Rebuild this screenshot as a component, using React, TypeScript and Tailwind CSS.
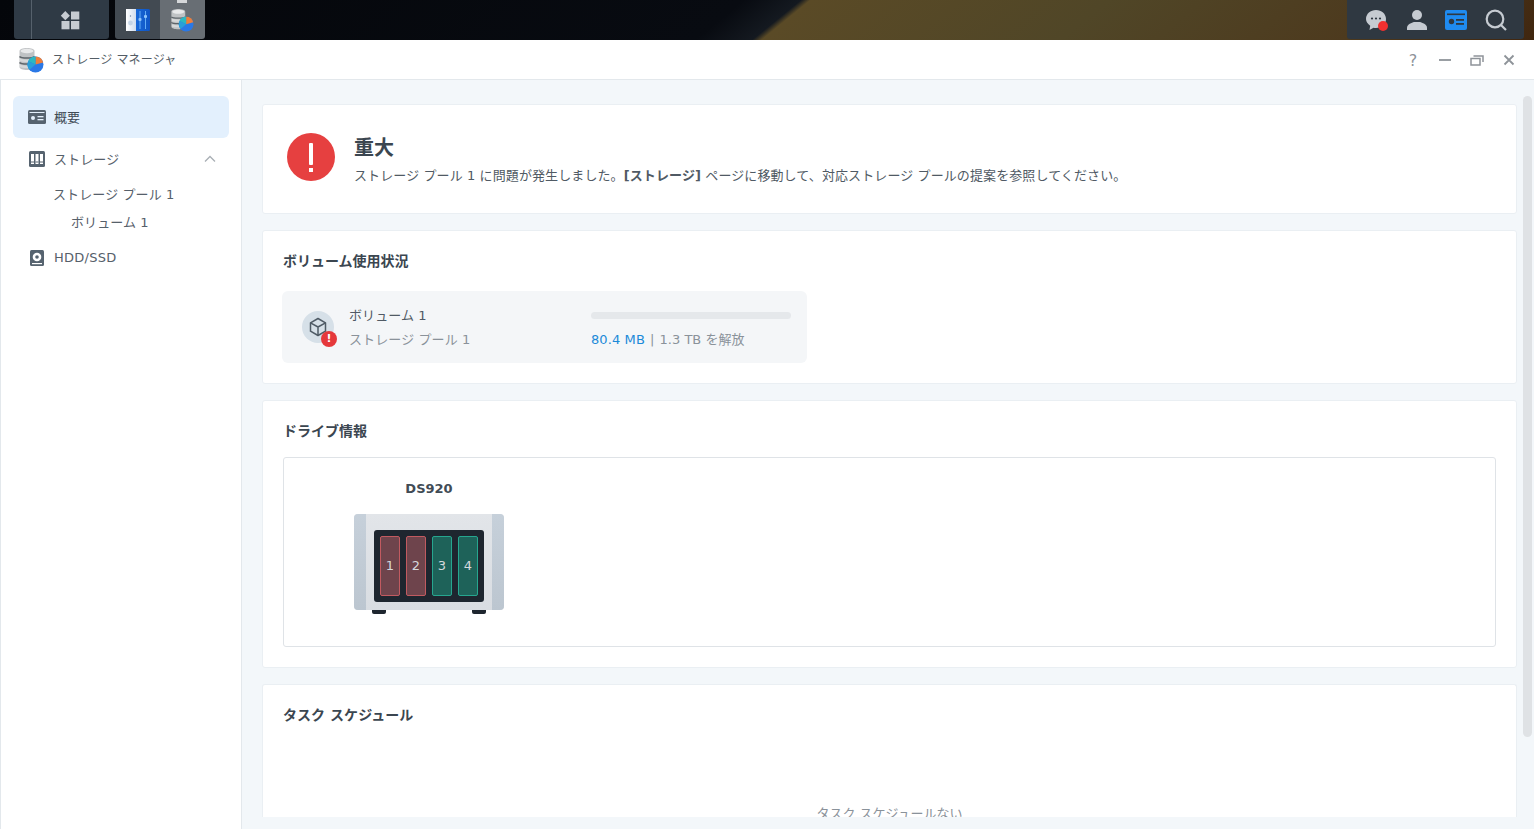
import React from "react";

const font = "font-['DejaVu_Sans','Noto_Sans_CJK_JP',sans-serif]";

function StorageAppIcon({ size = 26 }: { size?: number }) {
  return (
    <svg width={size} height={size} viewBox="0 0 26 26">
      <path d="M1.500 4C1.500 2 5 1 9 1s7.500 1 7.500 3v16c0 2-3.500 3-7.500 3s-7.500-1-7.500-3z" fill="#bfc2c4" />
      <ellipse cx="9" cy="4" rx="6.500" ry="2.200" fill="#e8e9ea" />
      <path d="M1.500 9.500c1.500 2 13.500 2 15 0M1.500 15.500c1.500 2 13.500 2 15 0" stroke="#5f656a" strokeWidth="1.400" fill="none" />
      <path d="M2 11.500c2 1.500 12 1.500 14 0v2.500c-2 1.300-12 1.300-14 0z" fill="#d6d8d9" />
      <path d="M2 17.500c2 1.500 12 1.500 14 0v2.500c-2 1.300-12 1.300-14 0z" fill="#d6d8d9" />
      <circle cx="17.500" cy="17.500" r="8" fill="#2a78e6" />
      <path d="M17.500 17.500V9.500a8 8 0 0 1 7.700 6z" fill="#ee7f3a" />
      <path d="M17.500 17.500l-7.300-3.300A8 8 0 0 1 17.500 9.500z" fill="#2cb8c0" />
      <path d="M17.500 17.500l-7.300-3.300a8 8 0 0 0 1.300 8.500z" fill="#2a9fd8" />
    </svg>
  );
}

function ControlPanelIcon() {
  return (
    <svg width="26" height="24" viewBox="0 0 26 24">
      <defs>
        <linearGradient id="cpRight" x1="0" y1="0" x2="1" y2="0">
          <stop offset="0" stopColor="#1c74e6" />
          <stop offset="1" stopColor="#0f55c4" />
        </linearGradient>
        <linearGradient id="cpLeft" x1="0" y1="0" x2="1" y2="0">
          <stop offset="0" stopColor="#ffffff" />
          <stop offset="1" stopColor="#cfdced" />
        </linearGradient>
      </defs>
      <rect x="1" y="1" width="24" height="22" rx="1.500" fill="url(#cpRight)" />
      <rect x="1" y="1" width="10" height="22" fill="url(#cpLeft)" />
      <circle cx="5.500" cy="15" r="2.400" fill="#c4d4e6" />
      <circle cx="5.500" cy="8" r="0.700" fill="#6d87a5" />
      <path d="M15 3v18M20.500 3v18" stroke="#62adf7" strokeWidth="1" />
      <rect x="13.500" y="10" width="3" height="3" rx="1" fill="#8ec4fb" />
      <rect x="19" y="7" width="3" height="3" rx="1" fill="#8ec4fb" />
    </svg>
  );
}

function Grid4() {
  return (
    <svg width="20" height="20" viewBox="0 0 20 20" fill="#c6cbd1">
      <path d="M5.300 1l4.600 4.700-4.600 4.500L.8 5.700z" />
      <rect x="11" y="1.500" width="8.300" height="8" />
      <rect x="1.500" y="11" width="8" height="8.300" />
      <rect x="11" y="11" width="8.300" height="8.300" />
    </svg>
  );
}

function CardIcon({ bg, fg, w = 22, h = 20 }: { bg: string; fg: string; w?: number; h?: number }) {
  return (
    <svg width={w} height={h} viewBox="0 0 22 20">
      <rect x="0" y="0" width="22" height="20" rx="2" fill={bg} />
      <rect x="2" y="3.500" width="18" height="1.600" fill={fg} />
      <circle cx="6.500" cy="11.500" r="2.700" fill={fg} />
      <rect x="11" y="9" width="8" height="1.800" fill={fg} />
      <rect x="11" y="13" width="8" height="1.800" fill={fg} />
    </svg>
  );
}

function NavOverview() {
  return (
    <svg width="18" height="14" viewBox="0 0 18 14">
      <rect width="18" height="14" rx="1.500" fill="#56636f" />
      <rect x="1.500" y="2" width="15" height="1" fill="#e4f0fc" />
      <circle cx="5" cy="8" r="2" fill="#e4f0fc" />
      <rect x="9.500" y="6" width="6" height="1.300" fill="#e4f0fc" />
      <rect x="9.500" y="9" width="6" height="1.300" fill="#e4f0fc" />
    </svg>
  );
}

function NavStorage() {
  return (
    <svg width="16" height="16" viewBox="0 0 16 16">
      <rect width="16" height="16" rx="1.500" fill="#56636f" />
      <rect x="2" y="3" width="3" height="10" fill="#fff" />
      <rect x="6.500" y="3" width="3" height="10" fill="#fff" />
      <rect x="11" y="3" width="3" height="10" fill="#fff" />
      <rect x="2" y="10.500" width="3" height="1" fill="#56636f" />
      <rect x="6.500" y="10.500" width="3" height="1" fill="#56636f" />
      <rect x="11" y="10.500" width="3" height="1" fill="#56636f" />
    </svg>
  );
}

function NavDisk() {
  return (
    <svg width="14" height="16" viewBox="0 0 14 16">
      <rect width="14" height="16" rx="1.500" fill="#56636f" />
      <circle cx="7" cy="7" r="4.300" fill="#fff" />
      <circle cx="7" cy="7" r="1.800" fill="#56636f" />
      <rect x="2" y="13" width="10" height="1.200" fill="#fff" />
    </svg>
  );
}

function Nas() {
  const bays = [
    { n: "1", c: "bg-[#6e444c] border-[#c15a60]" },
    { n: "2", c: "bg-[#6e444c] border-[#c15a60]" },
    { n: "3", c: "bg-[#1e6259] border-[#26a68f]" },
    { n: "4", c: "bg-[#1e6259] border-[#26a68f]" },
  ];
  return (
    <div className="flex flex-col w-[150px]">
      <div className="flex h-24 rounded-[4px] overflow-hidden bg-[linear-gradient(180deg,#e2e5e9,#d9dde2)]">
        <div className="w-3 bg-[linear-gradient(180deg,#c6d0da,#bcc6d0)]" />
        <div className="flex-1 flex items-center justify-center pt-2">
          <div className="w-[110px] h-[72px] rounded-[3px] bg-[#1e262f] flex items-center justify-center gap-1.5">
            {bays.map((b) => (
              <div
                key={b.n}
                className={`w-5 h-[60px] rounded-[2px] border flex items-center justify-center text-[13px] text-[#d5d9dd] ${b.c}`}
              >
                {b.n}
              </div>
            ))}
          </div>
        </div>
        <div className="w-3 bg-[linear-gradient(180deg,#c6d0da,#bcc6d0)]" />
      </div>
      <div className="flex justify-between px-[18px]">
        <div className="w-3.5 h-1 rounded-b-[2px] bg-[#1e262f]" />
        <div className="w-3.5 h-1 rounded-b-[2px] bg-[#1e262f]" />
      </div>
    </div>
  );
}

export default function App() {
  return (
    <div className={`h-[829px] w-[1534px] overflow-hidden flex flex-col bg-white text-[#414b55] ${font}`}>
      {/* desktop taskbar */}
      <header className="h-10 shrink-0 flex justify-between bg-[linear-gradient(140.8deg,#04060a_0%,#080b11_47%,#141920_50.600%,#5a4a26_51.200%,#504627_70%,#4d3a1e_88%,#40260f_100%)]">
        <div className="flex pl-[14px] gap-[6px]">
          <div className="w-[95px] h-[39px] rounded-b-[3px] bg-[#2f3a45] flex">
            <div className="w-[18px] border-r border-[#56616c]" />
            <div className="flex-1 flex items-center justify-center pr-[2px]"><Grid4 /></div>
          </div>
          <div className="h-[39px] rounded-b-[3px] overflow-hidden flex">
            <div className="w-[45px] bg-[#424a52] flex items-center justify-center"><ControlPanelIcon /></div>
            <div className="w-[45px] bg-[#686e74] flex items-center justify-center pr-[2px] relative">
              <div className="absolute top-0 left-[17px] w-[10px] h-[3px] bg-[#d5d7d9]" />
              <StorageAppIcon size={24} />
            </div>
          </div>
        </div>
        <div className="w-[177px] mr-[10px] h-[39px] rounded-b-[3px] bg-[#2f3841] flex items-center justify-between pl-[18px] pr-[17px]">
          <svg width="24" height="24" viewBox="0 0 24 24">
            <path d="M11 2c5.500 0 10 3.800 10 9s-4.500 9-10 9c-.9 0-1.700-.1-2.500-.3L4.500 22l.7-4.300C2.800 16 1 13.700 1 11c0-5.200 4.500-9 10-9z" fill="#c6cbd1" />
            <circle cx="7" cy="10.500" r="1.100" fill="#2f3841" />
            <circle cx="11" cy="10.500" r="1.100" fill="#2f3841" />
            <circle cx="15" cy="10.500" r="1.100" fill="#2f3841" />
            <circle cx="18" cy="18" r="5" fill="#f0302f" />
          </svg>
          <svg width="20" height="20" viewBox="0 0 20 20" fill="#c6cbd1">
            <circle cx="10" cy="5" r="5" />
            <path d="M0 20v-2.500c0-3 5-5 7-5.500h6c2 .5 7 2.500 7 5.500V20z" />
          </svg>
          <CardIcon bg="#1f8bf0" fg="#2f3841" />
          <svg width="22" height="22" viewBox="0 0 22 22" fill="none" stroke="#c6cbd1" strokeWidth="2.200">
            <circle cx="10" cy="10" r="8.300" />
            <path d="M16 16l5 5" />
          </svg>
        </div>
      </header>

      {/* window title bar */}
      <div className="h-10 shrink-0 border-b border-[#e3e8ec] flex items-center justify-between pl-[18px] pr-[18px]">
        <div className="flex items-center gap-[8px]">
          <StorageAppIcon size={26} />
          <span className="text-[12px] tracking-[0.15px] text-[#545d66]">ストレージ マネージャ</span>
        </div>
        <div className="flex items-center gap-[18px] text-[#8e9399]">
          <span className="text-[16px] w-3 -ml-[1px] mr-[1px] pt-[2px] text-center leading-none">?</span>
          <svg width="14" height="14" viewBox="0 0 14 14"><path d="M1 7h12" stroke="#8e9399" strokeWidth="1.800" /></svg>
          <svg width="14" height="14" viewBox="0 0 14 14" fill="none" stroke="#8e9399" strokeWidth="1.500"><rect x="1" y="5.500" width="9" height="6.500" /><path d="M3.500 3h9.500v6" /></svg>
          <svg width="14" height="14" viewBox="0 0 14 14"><path d="M2.500 2.500l9 9M11.500 2.500l-9 9" stroke="#8e9399" strokeWidth="1.800" /></svg>
        </div>
      </div>

      <div className="flex-1 min-h-0 flex">
        {/* sidebar */}
        <aside className="w-[242px] shrink-0 border-l border-r border-[#e3e8ec] pt-4 pl-3 pr-3 text-[13px]">
          <div className="h-[42px] w-[216px] rounded-[6px] bg-[#e3f0fd] flex items-center pl-[15px] gap-2">
            <NavOverview />
            <span className="pt-[1px] text-[#414b55]">概要</span>
          </div>
          <div className="h-[42px] flex items-center pl-[16px] pr-[13px] gap-[9px]">
            <NavStorage />
            <span className="flex-1 pt-[2px] text-[13px] tracking-[0.1px] text-[#56606a]">ストレージ</span>
            <svg width="12" height="8" viewBox="0 0 12 8" fill="none" stroke="#a9afb5" strokeWidth="1.300"><path d="M1 6.500l5-5 5 5" /></svg>
          </div>
          <div className="h-[28px] pt-[2px] flex items-center pl-[40px] text-[13px] tracking-[0.1px] text-[#56606a]">ストレージ プール 1</div>
          <div className="h-[28px] pt-[2px] flex items-center pl-[58px] text-[13px] tracking-[0.1px] text-[#56606a]">ボリューム 1</div>
          <div className="h-[42px] mt-[1px] flex items-center pl-[17px] gap-[10px]">
            <NavDisk />
            <span className="text-[13px] tracking-[0.25px] text-[#56606a]">HDD/SSD</span>
          </div>
        </aside>

        {/* main */}
        <main className="flex-1 min-w-0 bg-[#f3f7fa] flex pt-[24px] pl-[20px] pr-[2px] pb-3">
          <div className="flex-1 min-w-0 flex flex-col gap-4 overflow-hidden">
            <section className="h-[110px] shrink-0 rounded-[3px] bg-white border border-[#eaeff3] flex items-center pl-6 pb-1 gap-[20px]">
              <div className="w-12 h-12 rounded-full bg-[#e64040] flex flex-col items-center justify-center gap-[3px]">
                <div className="w-1 h-[22px] rounded-[1px] bg-white" />
                <div className="w-1 h-1 bg-white" />
              </div>
              <div className="flex flex-col gap-1 mt-[5px] -ml-[1px]">
                <div className="text-[20px] font-bold leading-[28px] text-[#3b4650]">重大</div>
                <div className="text-[13px] tracking-[0.1px] leading-[20px] text-[#505a64]">
                  ストレージ プール 1 に問題が発生しました。<b>[ストレージ]</b> ページに移動して、対応ストレージ プールの提案を参照してください。
                </div>
              </div>
            </section>

            <section className="h-[154px] shrink-0 rounded-[3px] bg-white border border-[#eaeff3] pt-5 pl-[19px]">
              <h2 className="pl-[1px] text-[14px] font-bold leading-5 text-[#3b4650]">ボリューム使用状況</h2>
              <div className="mt-5 w-[525px] h-[72px] rounded-[6px] bg-[#f4f6f8] flex items-center pl-5">
                <div className="relative w-8 h-8 rounded-full bg-[#d6e0e8] flex items-center justify-center shrink-0">
                  <svg width="20" height="20" viewBox="0 0 20 20" fill="none" stroke="#4f5b66" strokeWidth="1.500" strokeLinejoin="round">
                    <path d="M10 1.500l7.500 4.300v8.400L10 18.500l-7.500-4.300V5.800z" />
                    <path d="M2.500 5.800L10 10l7.500-4.200M10 10v8.500" />
                  </svg>
                  <div className="absolute -right-[3px] -bottom-[4px] w-4 h-4 rounded-full bg-[#e5383b] text-white text-[11px] font-bold leading-4 text-center">!</div>
                </div>
                <div className="ml-[15px] w-[242px] flex flex-col gap-[3px]">
                  <div className="text-[13px] tracking-[0.1px] leading-[21px] text-[#505a64]">ボリューム 1</div>
                  <div className="text-[13px] tracking-[0.1px] leading-[21px] text-[#8a929a]">ストレージ プール 1</div>
                </div>
                <div className="w-[200px] flex flex-col gap-[14px] pt-1">
                  <div className="h-[7px] rounded-full bg-[#e5e8eb]" />
                  <div className="text-[13px] leading-[14px] text-[#8a929a]">
                    <span className="text-[#1c8ad8] tracking-[0.1px]">80.4 MB</span>
                    <span> <span className="mx-[1px]">|</span> 1.3 TB を解放</span>
                  </div>
                </div>
              </div>
            </section>

            <section className="h-[268px] shrink-0 rounded-[3px] bg-white border border-[#eaeff3] pt-5 pl-5 pr-5">
              <h2 className="text-[14px] font-bold leading-5 text-[#3b4650]">ドライブ情報</h2>
              <div className="mt-4 h-[190px] rounded-[3px] border border-[#dfe3e7] pt-[21px] pl-[70px]">
                <div className="w-[150px] text-center text-[13px] font-bold leading-[20px] text-[#414b55]">DS920</div>
                <div className="mt-[15px]"><Nas /></div>
              </div>
            </section>

            <section className="flex-1 min-h-0 overflow-hidden rounded-t-[3px] bg-white border border-[#eaeff3] border-b-0 pt-5">
              <h2 className="pl-5 text-[14px] tracking-[0.05px] font-bold leading-5 text-[#3b4650]">タスク スケジュール</h2>
              <div className="mt-[79px] text-center text-[13px] leading-5 text-[#8a929a]">タスク スケジュールない</div>
            </section>
          </div>
          <div className="w-[15px] shrink-0 flex justify-center -mt-[8px] -mb-3">
            <div className="w-[9px] h-[641px] ml-[5px] rounded-full bg-[#dfe2e5]" />
          </div>
        </main>
      </div>
    </div>
  );
}
